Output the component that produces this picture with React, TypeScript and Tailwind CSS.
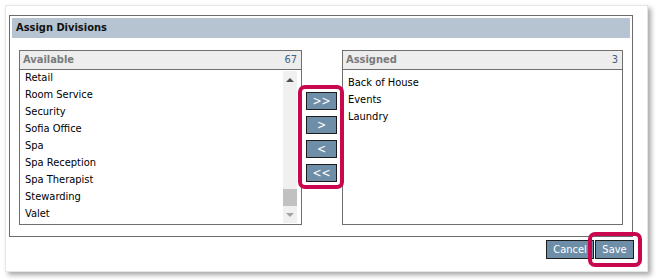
const available = [
  "Retail",
  "Room Service",
  "Security",
  "Sofia Office",
  "Spa",
  "Spa Reception",
  "Spa Therapist",
  "Stewarding",
  "Valet",
];

const assigned = ["Back of House", "Events", "Laundry"];

const moves = [">>", ">", "<", "<<"];

const ListHeader = ({ title, count }: { title: string; count: number }) => (
  <div className="flex h-[19px] items-center justify-between border-b border-[#6f6f6f] bg-[#ededed] pl-[3px] pr-[4px]">
    <span className="font-bold text-[#7a7a7a]">{title}</span>
    <span className="text-[#44617f]">{count}</span>
  </div>
);

const App = () => {
  return (
    <div
      className="h-[280px] w-[656px] bg-white pl-[5px] pt-[5px] text-[11px] text-black"
      style={{ fontFamily: '"DejaVu Sans Condensed", "Liberation Sans", sans-serif' }}
    >
      <div className="relative h-[267px] w-[643px] border border-[#e6e6e6] bg-white pl-[3px] pt-[9px] shadow-[3px_3px_5px_rgba(0,0,0,0.35)]">
        <div className="flex h-[222px] w-[624px] flex-col border border-[#6b6b6b] p-[2px]">
          <div className="h-[20px] bg-[#b5c4d0] pl-[4px] font-bold leading-[20px] text-[#111]">
            Assign Divisions
          </div>

          <div className="ml-[7px] mt-[12px] flex">
            {/* available */}
            <div className="flex h-[175px] w-[283px] flex-col border border-[#6f6f6f]">
              <ListHeader title="Available" count={67} />
              <div className="flex flex-1">
                <div className="-mt-[1px] flex-1 pl-[5px]">
                  {available.map((item) => (
                    <div key={item} className="h-[17px] leading-[17px]">
                      {item}
                    </div>
                  ))}
                </div>
                <div className="my-[1px] mr-[4px] flex w-[14px] flex-col bg-[#f0f0f0]">
                  <div className="flex h-[17px] items-center justify-center">
                    <div className="h-0 w-0 border-x-[4px] border-b-[4px] border-x-transparent border-b-[#505050]" />
                  </div>
                  <div className="flex flex-1 flex-col justify-end">
                    <div className="h-[17px] bg-[#c1c1c1]" />
                  </div>
                  <div className="flex h-[17px] items-center justify-center">
                    <div className="h-0 w-0 border-x-[4px] border-t-[4px] border-x-transparent border-t-[#a3a3a3]" />
                  </div>
                </div>
              </div>
            </div>

            {/* move buttons */}
            <div className="flex w-[40px] flex-col gap-[6px] pl-[4px] pt-[42px]">
              {moves.map((m) => (
                <button
                  key={m}
                  className="h-[18px] w-[31px] border border-[#1c1c1c] bg-[#6e8ea7] text-[12px] leading-[16px] text-white"
                >
                  {m}
                </button>
              ))}
            </div>

            {/* assigned */}
            <div className="flex h-[175px] w-[281px] flex-col border border-[#6f6f6f]">
              <ListHeader title="Assigned" count={3} />
              <div className="pl-[5px] pt-[4px]">
                {assigned.map((item) => (
                  <div key={item} className="h-[17px] leading-[17px]">
                    {item}
                  </div>
                ))}
              </div>
            </div>
          </div>
        </div>

        <div className="mt-[3px] flex w-[625px] justify-end gap-[1px]">
          <button className="h-[19px] w-[48px] border border-[#1c1c1c] bg-[#6e8ea7] text-[11px] leading-[17px] text-white">
            Cancel
          </button>
          <button className="h-[19px] w-[39px] border border-[#1c1c1c] bg-[#6e8ea7] text-[11px] leading-[17px] text-white">
            Save
          </button>
        </div>

        {/* highlight annotations */}
        <div className="absolute left-[292px] top-[79px] h-[104px] w-[46px] rounded-[7px] border-[4px] border-[#c8074f]" />
        <div className="absolute left-[582px] top-[226px] h-[35px] w-[54px] rounded-[7px] border-[4px] border-[#c8074f]" />
      </div>
    </div>
  );
};

export default App;
